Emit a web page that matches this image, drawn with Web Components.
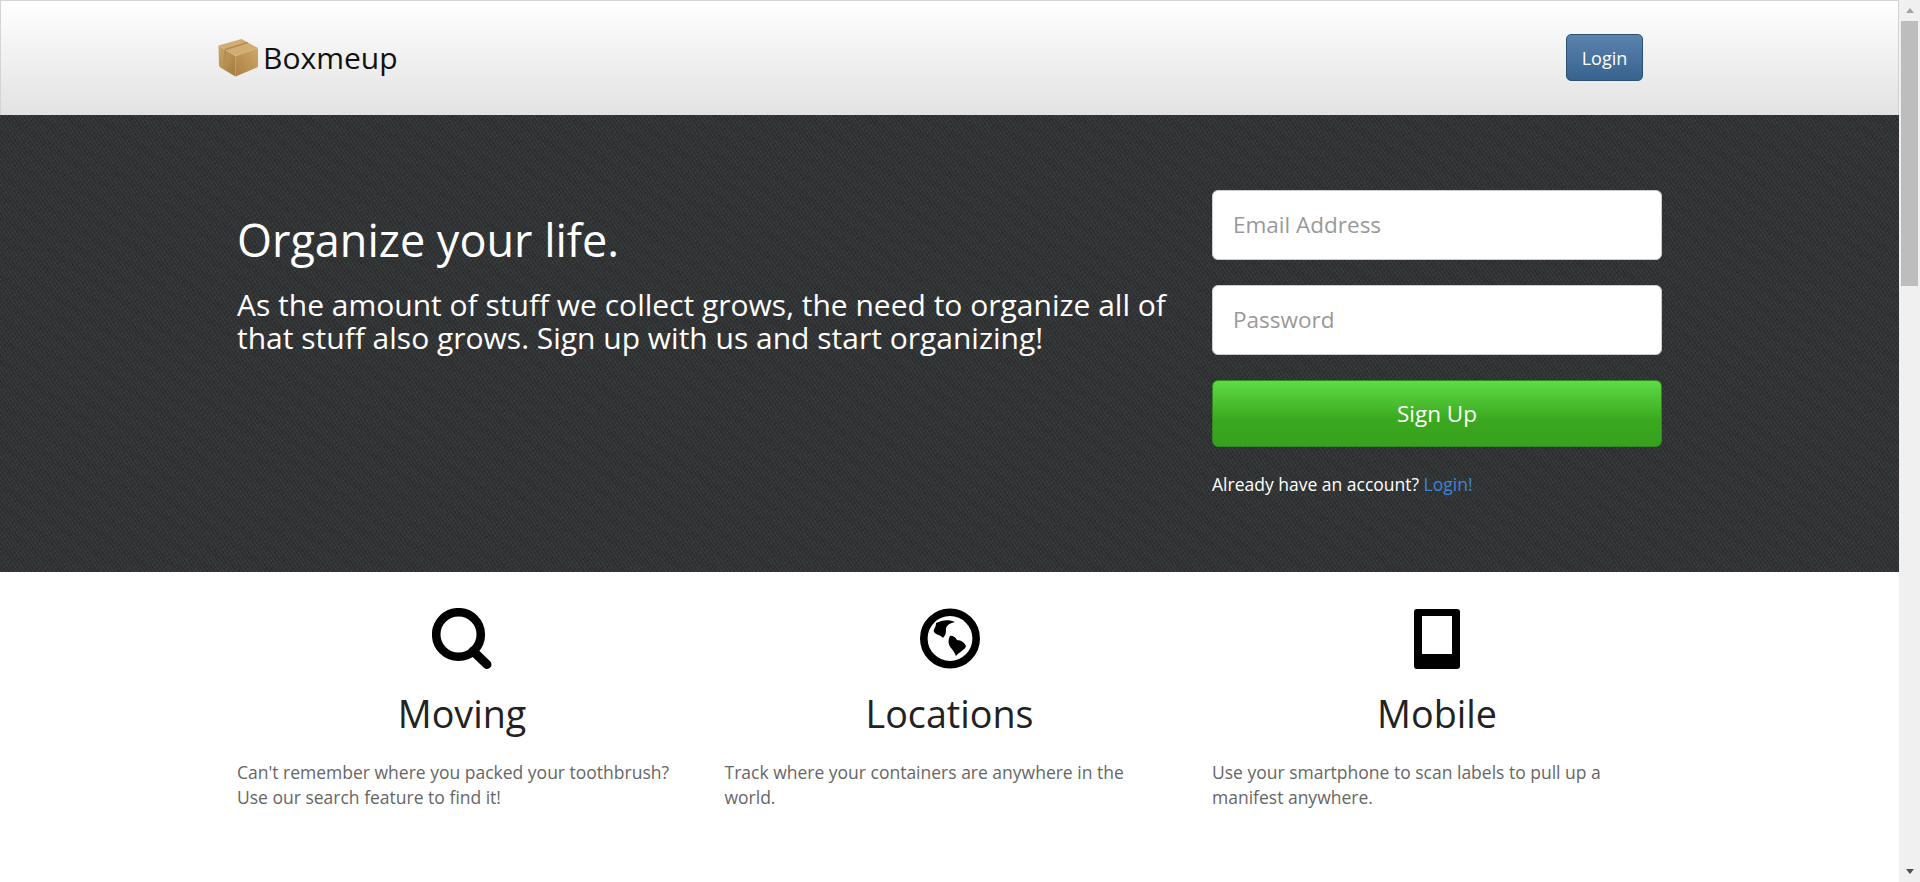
<!DOCTYPE html>
<html>
<head>
<meta charset="utf-8">
<title>Boxmeup</title>
<style>
    html, body { margin: 0; height: 100%; overflow: hidden; }
    body { display: flex; font-family: "Open Sans", sans-serif; color: #222; background: #fff; }
    page-main { flex: 1; min-width: 0; }
</style>
</head>
<body>
<page-main>
    <site-header></site-header>
    <hero-band>
        <signup-form slot="form"></signup-form>
    </hero-band>
    <feature-row>
        <feature-col title="Moving" icon="search">Can't remember where you packed your toothbrush? Use our search feature to find it!</feature-col>
        <feature-col title="Locations" icon="globe">Track where your containers are anywhere in the world.</feature-col>
        <feature-col title="Mobile" icon="tablet">Use your smartphone to scan labels to pull up a manifest anywhere.</feature-col>
    </feature-row>
</page-main>
<fake-scrollbar></fake-scrollbar>

<script>
const icons = {
    search: `<svg viewBox="0 0 60 61" width="60" height="61"><circle cx="26.5" cy="26.5" r="22.3" fill="none" stroke="#000" stroke-width="8.6"/><path d="M41 43 L55 56.5" stroke="#000" stroke-width="9" stroke-linecap="round"/></svg>`,
    globe: `<svg viewBox="0 0 60 61" width="60" height="61"><circle cx="30" cy="30.5" r="26.2" fill="none" stroke="#000" stroke-width="7.6"/><path d="M16 15 C22 12 29 11 35 14 C30 15 27 17 26 20 C26 24 26 27 23 30 C21 27 16 27 14 24 C13 21 16 20 16 15Z"/><path d="M30 28 C33 27 36 30 37 32 C41 32 45 35 46 38 C45 42 39 44 36 48 C34 44 33 42 31 40 C28 36 28 32 30 28Z"/></svg>`,
    tablet: `<svg viewBox="0 0 60 61" width="60" height="61"><path fill-rule="evenodd" d="M10 1 H50 Q53 1 53 4 V58 Q53 61 50 61 H10 Q7 61 7 58 V4 Q7 1 10 1Z M15 8 V46 H45 V8Z"/></svg>`
};

customElements.define('site-header', class extends HTMLElement {
    constructor() {
        super();
        this.attachShadow({mode: 'open'}).innerHTML = `
<style>
    :host {
        display: block;
        box-sizing: border-box;
        height: 115px;
        border: 1px solid #d4d4d4;
        border-bottom: 0;
        padding-bottom: 1px;
        background: linear-gradient(#fff, #e2e2e2);
    }
    .inner {
        width: 1425px;
        margin-left: 217px;
        height: 100%;
        display: flex;
        align-items: center;
        justify-content: space-between;
    }
    .brand { display: flex; align-items: center; gap: 5px; font-size: 30px; color: #111; }
    .brand svg { margin-top: 1px; }
    .btn {
        box-sizing: border-box;
        width: 77px;
        height: 47px;
        display: flex;
        align-items: center;
        justify-content: center;
        border: 1px solid #2c5177;
        border-radius: 5px;
        background: linear-gradient(#5b83ae, #38628f);
        color: #fff;
        font-size: 18px;
    }
</style>
<div class="inner">
    <div class="brand">
        <svg width="40" height="38" viewBox="0 0 39 38" preserveAspectRatio="none">
            <defs>
                <linearGradient id="l" x1="0" y1="0" x2="1" y2="1"><stop offset="0" stop-color="#cba765"/><stop offset="1" stop-color="#a07a3f"/></linearGradient>
                <linearGradient id="r" x1="0" y1="1" x2="1" y2="0"><stop offset="0" stop-color="#a98144"/><stop offset="1" stop-color="#cfa868"/></linearGradient>
            </defs>
            <path d="M0.5 6.5 L17 17 V37.5 L3 29 Q1 28 1 26Z" fill="url(#l)"/>
            <path d="M17 17 L39 9 V27 Q39 28.5 37 29 L17 37.5Z" fill="url(#r)"/>
            <path d="M0.5 6.5 L23 0 L39 9 L17 17Z" fill="#d1ad72"/>
            <path d="M7 10.5 L29 3.5 M7 10.5 V22" stroke="#b08c52" stroke-width="1.5" fill="none"/>
        </svg>
        <span>Boxmeup</span>
    </div>
    <div class="btn">Login</div>
</div>`;
    }
});

customElements.define('hero-band', class extends HTMLElement {
    constructor() {
        super();
        this.attachShadow({mode: 'open'}).innerHTML = `
<style>
    :host {
        display: block;
        height: 457px;
        box-sizing: border-box;
        padding: 75px 0 0 237px;
        color: #fff;
        background-color: #303334;
        background-image:
            repeating-linear-gradient(55deg, rgba(255,255,255,.055) 0 1px, transparent 1px 3px),
            repeating-linear-gradient(-50deg, rgba(0,0,0,.13) 0 1px, transparent 1px 4px),
            repeating-linear-gradient(35deg, rgba(0,0,0,.05) 0 7px, transparent 7px 17px);
    }
    .wrap { display: grid; grid-template-columns: 975px 450px; }
    h1 { margin: 0; padding-top: 27px; font-size: 45px; line-height: 46px; font-weight: 400; }
    p { margin: 25px 0 0; font-size: 30px; line-height: 33px; }
</style>
<div class="wrap">
    <div>
        <h1>Organize your life.</h1>
        <p>As the amount of stuff we collect grows, the need to organize all of that stuff also grows. Sign up with us and start organizing!</p>
    </div>
    <slot name="form"></slot>
</div>`;
    }
});

customElements.define('signup-form', class extends HTMLElement {
    constructor() {
        super();
        this.attachShadow({mode: 'open'}).innerHTML = `
<style>
    :host { display: flex; flex-direction: column; font-size: 17.5px; }
    .field {
        box-sizing: border-box;
        height: 70px;
        margin-bottom: 25px;
        padding: 0 20px 1px;
        display: flex;
        align-items: center;
        background: #fff;
        border: 1px solid #ccc;
        border-radius: 6px;
        color: #999;
        font-size: 22.5px;
    }
    .go {
        box-sizing: border-box;
        height: 67px;
        display: flex;
        align-items: center;
        justify-content: center;
        border: 1px solid #2e8a1c;
        border-radius: 6px;
        background: linear-gradient(#5fdb46, #3aa81f 60%, #37a11d);
        color: #fff;
        font-size: 22.5px;
    }
    .note { margin-top: 24px; line-height: 26px; }
    .note span { color: #3f84d8; }
</style>
<div class="field">Email Address</div>
<div class="field">Password</div>
<div class="go">Sign Up</div>
<div class="note">Already have an account? <span>Login!</span></div>`;
    }
});

customElements.define('feature-row', class extends HTMLElement {
    constructor() {
        super();
        this.attachShadow({mode: 'open'}).innerHTML = `
<style>
    :host {
        display: grid;
        grid-template-columns: repeat(3, 450px);
        column-gap: 37.5px;
        padding: 36px 0 0 237px;
    }
</style>
<slot></slot>`;
    }
});

customElements.define('feature-col', class extends HTMLElement {
    constructor() {
        super();
        this.attachShadow({mode: 'open'}).innerHTML = `
<style>
    :host { display: block; }
    .icon { height: 62px; text-align: center; }
    h2 { margin: 18px 0 0; font-size: 37.7px; line-height: 52px; font-weight: 400; text-align: center; color: #222; }
    p { margin: 20px 0 0; font-size: 17.5px; line-height: 25px; color: #666; }
</style>
<div class="icon">${icons[this.getAttribute('icon')]}</div>
<h2>${this.getAttribute('title')}</h2>
<p><slot></slot></p>`;
    }
});

customElements.define('fake-scrollbar', class extends HTMLElement {
    constructor() {
        super();
        this.attachShadow({mode: 'open'}).innerHTML = `
<style>
    :host {
        flex: 0 0 21px;
        display: flex;
        flex-direction: column;
        align-items: center;
        background: #f0f0f0;
    }
    .up, .down { flex: 0 0 21px; display: flex; align-items: center; justify-content: center; }
    .up i { border: 4px solid transparent; border-bottom: 5px solid #a3a3a3; border-top: 0; }
    .down i { border: 4px solid transparent; border-top: 5px solid #505050; border-bottom: 0; }
    .thumb { width: 17px; flex: 0 0 265px; background: #bdbdbd; }
    .rest { flex: 1; }
</style>
<div class="up"><i></i></div>
<div class="thumb"></div>
<div class="rest"></div>
<div class="down"><i></i></div>`;
    }
});
</script>
</body>
</html>
